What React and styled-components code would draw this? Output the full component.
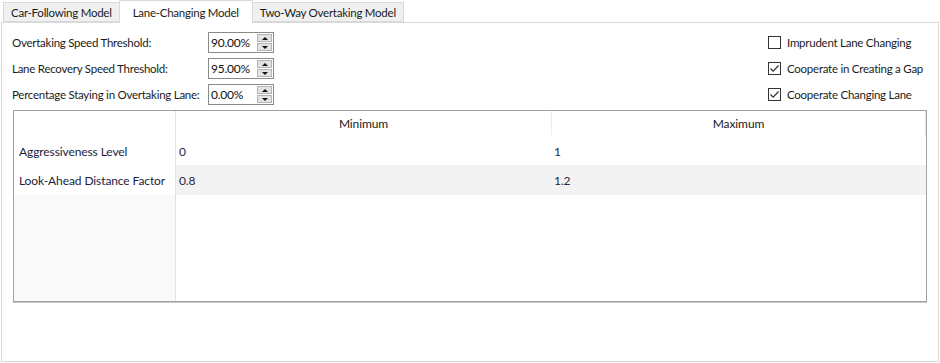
import React from 'react';
import styled, { createGlobalStyle } from 'styled-components';

const GlobalStyle = createGlobalStyle`
    html, body {
        margin: 0;
        padding: 0;
        background: #ffffff;
    }
    body {
        font-family: Lato, 'Liberation Sans', sans-serif;
        font-size: 11.5px;
        letter-spacing: -0.25px;
        color: #1b1b1b;
    }
`;

const tabs = ['Car-Following Model', 'Lane-Changing Model', 'Two-Way Overtaking Model']

const fields = [
    { label: 'Overtaking Speed Threshold:', value: '90.00%' },
    { label: 'Lane Recovery Speed Threshold:', value: '95.00%' },
    { label: 'Percentage Staying in Overtaking Lane:', value: '0.00%' },
]

const options = [
    { label: 'Imprudent Lane Changing', checked: false },
    { label: 'Cooperate in Creating a Gap', checked: true },
    { label: 'Cooperate Changing Lane', checked: true },
]

const rows = [
    { name: 'Aggressiveness Level', min: '0', max: '1', h: 28 },
    { name: 'Look-Ahead Distance Factor', min: '0.8', max: '1.2', h: 30 },
]

export default function App() {
    return (
        <Window>
            <GlobalStyle />
            <TabStrip>
                {tabs.map((t, i) => (
                    <Tab key={t} active={i === 1}>{t}</Tab>
                ))}
            </TabStrip>
            <Panel>
                <TopArea>
                    <Fields>
                        {fields.map((f) => (
                            <FieldRow key={f.label}>
                                <Label>{f.label}</Label>
                                <SpinBox>
                                    <SpinValue>{f.value}</SpinValue>
                                    <SpinButtons>
                                        <SpinButton><Arrow up /></SpinButton>
                                        <SpinButton><Arrow /></SpinButton>
                                    </SpinButtons>
                                </SpinBox>
                            </FieldRow>
                        ))}
                    </Fields>
                    <Checks>
                        {options.map((o) => (
                            <CheckRow key={o.label}>
                                <Box>
                                    {o.checked && (
                                        <svg width="11" height="11" viewBox="0 0 11 11">
                                            <path d="M1.5 5.5 L4.2 8.2 L9.5 2.5" fill="none" stroke="#333" strokeWidth="1.2" />
                                        </svg>
                                    )}
                                </Box>
                                <span>{o.label}</span>
                            </CheckRow>
                        ))}
                    </Checks>
                </TopArea>
                <Grid>
                    <HeaderRow>
                        <RowHead />
                        <ColHead>Minimum</ColHead>
                        <ColHead last>Maximum</ColHead>
                    </HeaderRow>
                    {rows.map((r, i) => (
                        <DataRow key={r.name} h={r.h}>
                            <RowHead>{r.name}</RowHead>
                            <Cell alt={i % 2 === 1}>{r.min}</Cell>
                            <Cell alt={i % 2 === 1}>{r.max}</Cell>
                        </DataRow>
                    ))}
                    <Filler>
                        <RowHead />
                        <div />
                    </Filler>
                </Grid>
            </Panel>
        </Window>
    )
}

const Window = styled.div`
    width: 940px;
    height: 363px;
    display: flex;
    flex-direction: column;
    box-sizing: border-box;
    padding: 0 1px 1px 1px;
`;
const TabStrip = styled.div`
    display: flex;
    align-items: flex-end;
    height: 22px;
    padding-left: 2px;
    position: relative;
    z-index: 1;
`;
const Tab = styled.div`
    height: ${p => p.active ? '23px' : '20px'};
    margin-bottom: ${p => p.active ? '-1px' : '0'};
    box-sizing: border-box;
    padding: 0 ${p => p.active ? '13px' : '7px'};
    display: flex;
    align-items: center;
    background: ${p => p.active ? '#ffffff' : '#f0f0f0'};
    border: 1px solid #d9d9d9;
    border-bottom: ${p => p.active ? 'none' : '1px solid #d9d9d9'};
    margin-left: ${p => p.active ? '-1px' : '0'};
    margin-right: ${p => p.active ? '-1px' : '0'};
    color: #1b1b1b;
    white-space: nowrap;
`;
const Panel = styled.div`
    flex: 1;
    border: 1px solid #d9d9d9;
    background: #ffffff;
    padding: 9px 0 0 10px;
    box-sizing: border-box;
`;
const TopArea = styled.div`
    display: flex;
    justify-content: space-between;
    padding-right: 12px;
`;
const Fields = styled.div`
    display: flex;
    flex-direction: column;
    gap: 5px;
`;
const FieldRow = styled.div`
    display: flex;
    align-items: center;
    height: 21px;
`;
const Label = styled.div`
    width: 196px;
    white-space: nowrap;
`;
const SpinBox = styled.div`
    width: 66px;
    height: 21px;
    box-sizing: border-box;
    border: 1px solid #8a8a8a;
    display: flex;
    align-items: center;
    background: #ffffff;
`;
const SpinValue = styled.div`
    flex: 1;
    padding-left: 2px;
    font-size: 12px;
    color: #111;
`;
const SpinButtons = styled.div`
    width: 15px;
    height: 17px;
    margin-right: 1px;
    display: flex;
    flex-direction: column;
    gap: 1px;
`;
const SpinButton = styled.div`
    flex: 1;
    background: #e3e3e3;
    border: 1px solid #b4b4b4;
    display: flex;
    align-items: center;
    justify-content: center;
`;
const Arrow = styled.div`
    width: 0;
    height: 0;
    border-left: 3px solid transparent;
    border-right: 3px solid transparent;
    ${p => p.up ? 'border-bottom: 3px solid #111;' : 'border-top: 3px solid #111;'}
`;
const Checks = styled.div`
    display: flex;
    flex-direction: column;
    gap: 5px;
    width: 158px;
`;
const CheckRow = styled.div`
    display: flex;
    align-items: center;
    height: 21px;
    gap: 6px;
    color: #1b1b1b;
    white-space: nowrap;
`;
const Box = styled.div`
    width: 13px;
    height: 13px;
    box-sizing: border-box;
    border: 1px solid #333;
    background: #fff;
    display: flex;
    align-items: center;
    justify-content: center;
    flex-shrink: 0;
`;
const Grid = styled.div`
    margin-top: 5px;
    margin-left: 1px;
    width: 914px;
    height: 192px;
    box-sizing: border-box;
    border: 1px solid #a0a0a0;
    box-shadow: 0 1px 0 #c6c6c6;
    display: flex;
    flex-direction: column;
    font-size: 12px;
    letter-spacing: -0.1px;
    overflow: hidden;
`;
const HeaderRow = styled.div`
    display: grid;
    grid-template-columns: 162px 376px 1fr;
    height: 26px;
    flex-shrink: 0;
`;
const ColHead = styled.div`
    display: flex;
    align-items: center;
    justify-content: center;
    border-right: ${p => p.last ? '1px solid #e4e4e4' : '1px solid #ececec'};
    height: 24px;
    color: #1a1a1a;
`;
const DataRow = styled.div`
    display: grid;
    grid-template-columns: 162px 1fr 1fr;
    height: ${p => p.h}px;
    flex-shrink: 0;
`;
const RowHead = styled.div`
    background: #ffffff;
    border-right: 1px solid #e2e2e2;
    display: flex;
    align-items: center;
    padding-left: 5px;
    color: #1d1d3a;
    white-space: nowrap;
`;
const Cell = styled.div`
    background: ${p => p.alt ? '#f3f3f3' : '#ffffff'};
    display: flex;
    align-items: center;
    padding-left: 3px;
    color: #2e2446;
`;
const Filler = styled.div`
    flex: 1;
    display: grid;
    grid-template-columns: 162px 1fr;
    & > :first-child {
        background: #f9f9f9;
    }
`;
